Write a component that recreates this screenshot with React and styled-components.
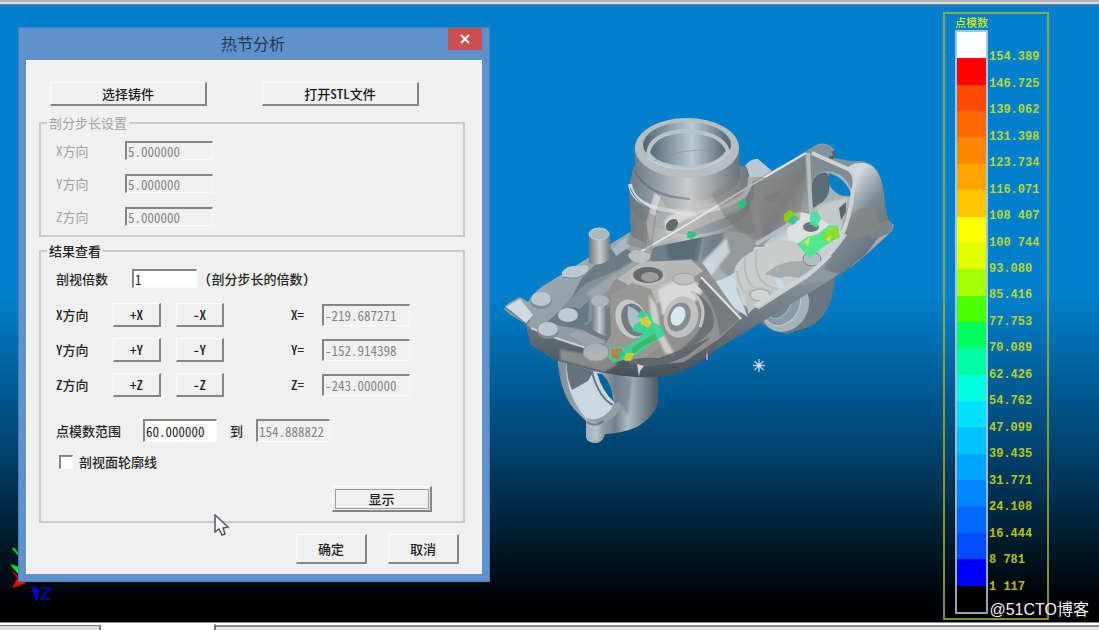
import React from 'react'
import styled, { createGlobalStyle } from 'styled-components'

const GlobalStyle = createGlobalStyle`
  * {
    box-sizing: border-box;
  }

  body {
    background: #000;
    margin: 0;
  }

  body, button, input {
    font-family: 'Noto Sans CJK SC', 'Noto Sans', sans-serif;
    font-feature-settings: 'hwid';
    font-size: 13px;
    line-height: 18px;
  }
`

const Page = styled.div`
  display: flex;
  flex-direction: column;
  min-height: 100vh;
`

const TopEdge = styled.div`
  background: linear-gradient(#b4b4b4 0 2px, #dedede 2px 4px, #807c78 4px);
  height: 5px;
`

const Scene = styled.main`
  background: linear-gradient(#0080cc 47%, #00406a 73%, #000 97%);
  display: flex;
  flex: 1;
  padding: 7px 50px 2px 18px;
  position: relative;
`

const BottomEdge = styled.div`
  align-items: flex-end;
  background: linear-gradient(#8c8c8c 0 1px, #fff 1px 3px, #8a8a8a 3px 5px, #e8e8e8 5px);
  display: flex;
  height: 8px;
`

const SheetTab = styled.div`
  background: ${({ $active }) => ($active ? '#fff' : '#dcdcdc')};
  border-right: 2px solid #777;
  border-top: 1px solid ${({ $active }) => ($active ? '#fff' : '#777')};
  height: ${({ $active }) => ($active ? '6px' : '5px')};
  width: ${({ $active }) => ($active ? '115px' : '101px')};
`

const Triad = styled.svg`
  bottom: 16px;
  height: 60px;
  left: 8px;
  position: absolute;
  width: 50px;
`

const Dialog = styled.section`
  align-self: flex-start;
  background: #5f91cc;
  border: 1px solid #4a7fb9;
  flex: 0 0 472px;
  margin-top: 15px;
  padding: 0 7px 7px;
  position: relative;
`

const TitleBar = styled.header`
  align-items: flex-start;
  display: flex;
  height: 32px;
`

const DialogTitle = styled.h1`
  color: #26384f;
  flex: 1;
  font-size: 16px;
  font-weight: 400;
  line-height: 30px;
  margin: 0;
  padding-left: 32px;
  text-align: center;
`

const CloseButton = styled.button`
  align-items: center;
  background: #c94f50;
  border: 0;
  display: flex;
  height: 22px;
  justify-content: center;
  padding: 0;
  width: 34px;
`

const DialogBody = styled.form`
  background: #f0f0f0;
  border-left: 1px solid #fff;
  border-top: 1px solid #fff;
  padding: 21px 17px 10px 12px;
`

const TopActions = styled.div`
  display: flex;
  gap: 55px;
  margin-bottom: 8px;
  padding-left: 11px;
`

const Button = styled.button`
  background: #f0f0f0;
  border: 1px solid #fafafa;
  border-bottom: 2px solid #858585;
  border-right: 2px solid #858585;
  color: #1c1c1c;
  font-weight: 500;
  height: ${({ $height }) => $height || 24}px;
  line-height: 18px;
  outline: ${({ $default }) => ($default ? '1px solid #9c9c9c' : 'none')};
  outline-offset: -4px;
  padding: 0;
  width: ${({ $width }) => $width}px;
`

const Group = styled.fieldset`
  border: 2px solid #cbcbcb;
  color: ${({ $muted }) => ($muted ? '#a3a3a3' : '#262626')};
  margin: 0 0 5px;
  min-width: 0;
  padding: 9px 16px 9px 15px;
`

const GroupTitle = styled.legend`
  font-weight: ${({ $strong }) => ($strong ? 500 : 400)};
  line-height: 18px;
  margin-left: -9px;
  padding: 0 2px;
`

const StepRow = styled.div`
  align-items: center;
  display: grid;
  grid-template-columns: 69px 88px;
  height: 19px;

  & + & {
    margin-top: 14px;
  }
`

const Label = styled.label`
  font-weight: ${({ $strong }) => ($strong ? 500 : 400)};
  white-space: nowrap;
`

const Field = styled.input`
  background: ${({ disabled }) => (disabled ? '#f0f0f0' : '#fff')};
  border: 1px solid #f8f8f8;
  border-left: 2px solid #858585;
  border-top: 2px solid #858585;
  color: ${({ disabled }) => (disabled ? '#858585' : '#222')};
  height: ${({ $height }) => $height}px;
  line-height: 16px;
  min-width: 0;
  outline: 0;
  padding: 0 1px;
  width: ${({ $width }) => $width}px;
`

const MultipleRow = styled.div`
  align-items: center;
  display: grid;
  grid-template-columns: 76px 65px auto;
  height: 19px;
  margin-bottom: 15px;

  & > span {
    font-weight: 500;
    padding-left: 8px;
  }
`

const AxisRow = styled.div`
  align-items: center;
  display: grid;
  grid-template-columns: 57px 63px 115px 31px 88px;
  height: 24px;
  margin-bottom: 11px;
`

const RangeRow = styled.div`
  align-items: center;
  display: grid;
  grid-template-columns: 87px 74px 39px 74px;
  height: 23px;
  margin: 22px 0 13px;

  & > span {
    font-weight: 500;
    text-align: center;
  }
`

const CheckRow = styled.div`
  align-items: center;
  display: flex;
  gap: 6px;
  height: 14px;
  padding-left: 3px;
`

const Checkbox = styled.input`
  appearance: none;
  background: #fff;
  border: 1px solid #f8f8f8;
  border-left: 2px solid #858585;
  border-top: 2px solid #858585;
  height: 14px;
  margin: 0;
  width: 14px;
`

const ShowRow = styled.div`
  display: flex;
  justify-content: flex-end;
  margin-top: 17px;
  padding-right: 15px;
`

const Footer = styled.div`
  display: flex;
  gap: 21px;
  justify-content: flex-end;
  margin-top: 11px;
  padding-right: 6px;
`

const Cursor = styled.svg`
  height: 24px;
  left: 195px;
  position: absolute;
  top: 486px;
  width: 16px;
`

const ModelView = styled.svg`
  flex: 1;
  height: 608px;
  min-width: 0;
`

const ScalePanel = styled.aside`
  border: 2px solid rgba(176, 190, 30, 0.75);
  display: grid;
  flex: 0 0 106px;
  grid-template-columns: 33px 1fr;
  grid-template-rows: 16px 1fr;
  padding: 0 0 4px 10px;
`

const ScaleTitle = styled.h2`
  color: #dbe800;
  font-size: 11px;
  font-weight: 500;
  grid-column: 1 / -1;
  line-height: 16px;
  margin: 0;
`

const ScaleBar = styled.div`
  border: 2px solid rgba(215, 235, 255, 0.7);
  display: flex;
  flex-direction: column;
`

const Swatch = styled.div`
  background: ${({ $color }) => $color};
  flex: 1;
`

const ScaleLabels = styled.ol`
  color: rgba(232, 240, 0, 0.8);
  display: flex;
  flex-direction: column;
  font-family: 'Liberation Mono', monospace;
  font-size: 12px;
  font-weight: 700;
  list-style: none;
  margin: 14px 0;
  padding: 0 0 0 1px;
`

const ScaleLabel = styled.li`
  align-items: center;
  display: flex;
  flex: 1;
  line-height: 14px;
  white-space: pre;
`

const Watermark = styled.div`
  bottom: 1px;
  color: #f4f4f4;
  font-family: 'Liberation Sans', 'Noto Sans CJK SC', sans-serif;
  font-size: 16px;
  line-height: 22px;
  position: absolute;
  right: 10px;
`

const colors = [
  '#ffffff', '#ff0000', '#ff4800', '#ff6800', '#ff8700', '#ffa500', '#ffc400', '#ffff00',
  '#e1ff00', '#a5ff00', '#4bff00', '#00ff5a', '#00ffa5', '#00ffe1', '#00e1ff', '#00c3ff',
  '#00a5ff', '#0087ff', '#0069ff', '#004bff', '#0000ff', '#000000',
]

const values = [
  '154.389', '146.725', '139.062', '131.398', '123.734', '116.071', '108 407',
  '100 744', '93.080', '85.416', '77.753', '70.089', '62.426', '54.762',
  '47.099', '39.435', '31.771', '24.108', '16.444', '8 781', '1 117',
]

const steps = ['X', 'Y', 'Z']

const axes = [
  { name: 'X', value: '-219.687271' },
  { name: 'Y', value: '-152.914398' },
  { name: 'Z', value: '-243.000000' },
]

const Casting = () => (
  <ModelView viewBox="490 12 453 608" preserveAspectRatio="xMinYMin meet" role="img" aria-label="铸件">
    <defs>
      <linearGradient id="tube">
        <stop offset="0" stopColor="#6f7b82" />
        <stop offset=".22" stopColor="#959ea3" />
        <stop offset=".5" stopColor="#c9cbcc" />
        <stop offset=".72" stopColor="#a5a7a8" />
        <stop offset="1" stopColor="#68737a" />
      </linearGradient>
      <linearGradient id="bore">
        <stop offset="0" stopColor="#52646e" />
        <stop offset=".55" stopColor="#b9cad2" />
        <stop offset="1" stopColor="#53636d" />
      </linearGradient>
      <linearGradient id="plate" x1="0" y1="0" x2="1" y2="1">
        <stop offset="0" stopColor="#b7c3c9" />
        <stop offset=".5" stopColor="#8e9aa1" />
        <stop offset="1" stopColor="#a8aeb0" />
      </linearGradient>
      <linearGradient id="skirt" x1="0" y1="0" x2="0" y2="1">
        <stop offset="0" stopColor="#b8bbbc" />
        <stop offset=".5" stopColor="#7b858b" />
        <stop offset="1" stopColor="#465158" />
      </linearGradient>
      <linearGradient id="ring">
        <stop offset="0" stopColor="#7d8b92" />
        <stop offset=".35" stopColor="#aeb9bf" />
        <stop offset=".58" stopColor="#71808a" />
        <stop offset=".7" stopColor="#aebbc2" />
        <stop offset="1" stopColor="#4a5a64" />
      </linearGradient>
      <linearGradient id="wall" x1="0" y1="0" x2="1" y2="1">
        <stop offset="0" stopColor="#969b9e" />
        <stop offset=".55" stopColor="#777c7f" />
        <stop offset="1" stopColor="#c1c2c2" />
      </linearGradient>
      <linearGradient id="pocket" x1="0" y1="0" x2="1" y2="1">
        <stop offset="0" stopColor="#566871" />
        <stop offset=".42" stopColor="#77868d" />
        <stop offset=".6" stopColor="#dce7ec" />
        <stop offset="1" stopColor="#8f999e" />
      </linearGradient>
      <linearGradient id="side" x1="0" y1="0" x2=".7" y2="1">
        <stop offset="0" stopColor="#aebfc7" />
        <stop offset=".3" stopColor="#d0dde2" />
        <stop offset=".58" stopColor="#7e8b91" />
        <stop offset="1" stopColor="#5b686f" />
      </linearGradient>
      <filter id="soft" x="-5%" y="-5%" width="110%" height="110%">
        <feGaussianBlur stdDeviation="1.3" />
      </filter>
    </defs>

    {/* lower ring */}
    <path d="M557 350Q558 390 574 409L586 421L586 437Q587 443 597 443Q603 442 605 434Q620 434 637 427Q656 415 658 402L658 365Z" fill="url(#ring)" />
    <path d="M567 361Q586 362 602 374Q616 391 614 408Q599 424 585 417Q563 390 567 361Z" fill="#cbd8de" />
    <path d="M567 361L594 371L588 381L572 390Q566 378 567 361Z" fill="#63747e" />
    <path d="M602 374Q612 383 614 402Q602 391 597 373Z" fill="#08649e" />
    <path d="M592 372Q599 398 613 405" fill="none" stroke="#667983" strokeWidth="2" />
    <path d="M614 404L623 401Q619 417 605 422Q595 424 586 420Q606 421 614 404Z" fill="#929ea4" />
    <path d="M587 422Q596 428 603 421" fill="none" stroke="#69787f" strokeWidth="2" />
    <path d="M593 426L600 425L599 440L593 440Z" fill="#bdc9ce" opacity=".7" filter="url(#soft)" />
    <path d="M617 373L632 378L628 415L617 400Z" fill="#718089" opacity=".7" filter="url(#soft)" />

    {/* right rear boss */}
    <path d="M760 302L835 258Q837 287 829 306Q819 327 798 330L788 334Q773 332 759 322Z" fill="#687780" />
    <ellipse cx="785" cy="306" rx="23" ry="27" transform="rotate(32 785 306)" fill="#a5b2b8" />
    <ellipse cx="782" cy="305" rx="17" ry="22" transform="rotate(32 782 305)" fill="#8a9ba5" stroke="#c1cbd0" />
    <ellipse cx="780" cy="304" rx="10" ry="16" transform="rotate(32 780 304)" fill="#718590" stroke="#a9bac3" />

    {/* base plate */}
    <path d="M504 309L506 305L520 297L528 302Q533 291 551 281L612 243L632 231L760 175L812 170L862 242L836 269L721 342Q690 370 665 376Q630 379 593 371L554 359L531 344L526 324L511 315Z" fill="url(#plate)" />
    <path d="M526 324Q531 330 550 337L621 359Q650 361 680 350L850 245L888 220L892 231L868 253L835 277L716 350Q690 373 660 377Q630 379 595 371L555 360L531 345Z" fill="url(#skirt)" />
    <path d="M531 328Q560 341 608 354" stroke="#c8cdcf" fill="none" strokeWidth="2" />
    <path d="M504 308L520 299L530 321L527 325Z" fill="#718088" />
    <path d="M506 307L520 299L533 315L526 323Z" fill="#ccdce2" />
    <path d="M546 323L562 309L572 297L583 276L618 244L634 253L632 300L606 343L583 330Z" fill="#6e7b83" />
    <path d="M563 307L586 283L620 269L611 306L586 325Z" fill="#83919a" />
    <path d="M585 294L638 257L639 267L596 300Z" fill="#9ca4a8" filter="url(#soft)" />
    <path d="M557 314Q568 304 580 309L589 300L588 322L570 327Z" fill="#697981" />
    <ellipse cx="568" cy="315" rx="10" ry="7" fill="#bfcdd3" />
    <ellipse cx="541" cy="301" rx="11" ry="8" fill="#7f8e96" />
    <ellipse cx="541" cy="299" rx="10" ry="7" fill="#bbc8cd" />
    <ellipse cx="548" cy="331" rx="11" ry="8" fill="#7e8b92" />
    <ellipse cx="548" cy="329" rx="10" ry="7" fill="#bdc9ce" />
    <path d="M562 272Q567 265 576 266L587 265Q592 273 580 278Q568 281 562 276Z" fill="#bbcad0" />
    <path d="M563 277Q579 282 590 270" stroke="#697981" fill="none" />
    <ellipse cx="596" cy="352" rx="13" ry="9" fill="#aab1b4" stroke="#818b90" />
    <path d="M568 334Q576 329 587 333L607 341L590 347Z" fill="#a4a9ab" opacity=".7" />
    <path d="M593 300L607 300L607 337L592 330Z" fill="url(#tube)" />
    <ellipse cx="600" cy="301" rx="9" ry="6" fill="#aeb5b8" />
    <path d="M589 234L610 234L611 257Q602 268 589 263Z" fill="url(#tube)" />
    <ellipse cx="599" cy="234" rx="10" ry="6" fill="#a9bac1" stroke="#c3ced3" />
    <path d="M612 249L622 240L629 237L629 247L616 256Z" fill="#a8b9c1" />

    {/* right bracket */}
    <path d="M741 174Q747 158 758 159L772 171L759 184L742 193Z" fill="#b9c9cf" />
    <path d="M749 184L805 152L818 144Q827 142 834 149L835 158Q844 164 857 161Q871 160 878 172Q884 184 885 207L888 220L894 225L892 231Q883 237 877 239L868 253L854 265L827 280L764 292L738 250Z" fill="#8f9a9f" />
    <path d="M849 166Q865 158 876 170Q884 182 885 210L889 221L877 239L865 255L840 275L824 269L850 219Z" fill="url(#side)" />
    <path d="M805 152Q820 140 832 149L835 158L855 162L845 169L823 162Z" fill="#84939a" />
    <path d="M833 151Q837 158 829 158" fill="none" stroke="#52636c" strokeWidth="3" />
    <path d="M754 184L805 155L808 211L754 245Z" fill="url(#wall)" />
    <path d="M808 155L852 170L853 188L837 238L811 211Z" fill="#808c92" />
    <path d="M811 194Q810 175 822 172Q842 168 852 190L849 204L837 237L813 219Z" fill="#a6b1b6" />
    <path d="M811 197Q810 176 821 173Q831 170 829 183Q832 199 813 208Z" fill="#5d6d75" />
    <path d="M829 173Q846 178 852 196Q840 198 832 189Q827 184 829 173Z" fill="#0880c8" />
    <path d="M818 205L848 197L840 238L811 218Z" fill="#c5c9ca" filter="url(#soft)" />
    <path d="M839 208L846 202L846 212L841 220Z" fill="#5b666c" />
    <path d="M868 229L887 220L892 223L892 232L872 240Z" fill="#7a858a" />
    <path d="M850 218Q862 199 877 214L882 227Q865 242 846 237Z" fill="#898583" opacity=".7" />

    {/* centre hollow and flowing inner shapes */}
    <path d="M653 248L754 182L754 253L799 212L812 214L847 235Q829 263 798 280L750 308L701 283L650 260Z" fill="url(#pocket)" />
    <path d="M698 280Q688 247 706 231Q746 228 764 244Q767 265 750 276L738 288L746 315Z" fill="#a7b1b6" />
    <path d="M716 222L757 196L764 244Q756 262 729 278L708 255Z" fill="#8e9293" opacity=".75" filter="url(#soft)" />
    <path d="M666 243L692 226L704 234L697 268L668 260Z" fill="#566770" opacity=".8" filter="url(#soft)" />
    <path d="M704 234L724 228L722 246L699 268Z" fill="#64757e" opacity=".7" filter="url(#soft)" />
    <path d="M702 262L726 238L730 252L706 282Z" fill="#dbe6eb" opacity=".75" filter="url(#soft)" />
    <path d="M695 285Q740 282 755 247L767 247Q755 274 736 288L748 317L725 302Z" fill="#d2e1e8" opacity=".9" />
    <path d="M766 246Q778 236 799 243L832 256L809 277L759 309Q736 300 734 273Q735 256 766 246Z" fill="#cbcccc" />
    <path d="M737 271Q740 302 763 293M745 256Q742 294 771 290M757 249Q751 285 778 289" fill="none" stroke="#aeb6b9" strokeWidth="2" opacity=".7" />
    <path d="M770 263L781 280L787 291L778 288Z" fill="#c4dde8" />
    <path d="M765 274Q780 260 804 261L821 257L803 279Q790 275 779 278Z" fill="#a6acae" />
    <path d="M786 216L799 212Q819 214 832 232L838 240L810 247L788 239Z" fill="#dedfe1" />
    <ellipse cx="811" cy="227" rx="8" ry="5" fill="#68727a" />
    <ellipse cx="812" cy="259" rx="9" ry="7" fill="#b2bdc4" stroke="#77848b" />
    <path d="M745 292Q757 283 774 290L775 298Q759 302 748 314Z" fill="#bfc3c4" />
    <ellipse cx="760" cy="295" rx="10" ry="6" fill="#d1d3d3" stroke="#969e9f" />

    {/* tower */}
    <path d="M629 185L634 166L746 166Q753 181 750 207Q741 225 722 233L654 247L631 236Z" fill="url(#tube)" />
    <path d="M630 190Q645 211 690 213Q735 214 751 185L750 211Q728 233 690 235Q648 230 631 211Z" fill="#5f7079" opacity=".35" />
    <path d="M630 184Q632 203 661 209Q706 219 738 200Q751 192 750 177" fill="none" stroke="#d1d5d6" strokeWidth="4" />
    <path d="M630 188Q636 205 661 213" fill="none" stroke="#667780" strokeWidth="1" />
    <path d="M634 148L636 170Q647 200 691 201Q731 200 740 178L739 148Z" fill="url(#tube)" />
    <path d="M634 169Q645 196 690 199" fill="none" stroke="#51636d" strokeWidth="2" opacity=".5" />
    <ellipse cx="687" cy="148" rx="52" ry="30" fill="#b8bec0" />
    <ellipse cx="687" cy="145" rx="44" ry="23" fill="url(#bore)" />
    <path d="M648 153Q652 132 687 131Q722 133 728 151Q719 167 687 168Q656 167 648 153Z" fill="url(#bore)" stroke="#b7c5cb" strokeWidth="4" />
    <path d="M654 161Q682 147 716 151" fill="none" stroke="#9e8984" opacity=".6" />
    <path d="M647 158Q660 168 687 169Q717 168 730 151" fill="none" stroke="#c4cacc" strokeWidth="2" />

    {/* ghosted internal ribs */}
    <path d="M647 226L656 193L672 215L690 204L715 203L736 197L754 183L739 212L698 228L647 251Z" fill="#cac6c4" opacity=".5" />
    <path d="M651 245L656 210L661 197L654 193L646 223Z" fill="#f0eeec" opacity=".5" />
    <path d="M664 222Q677 203 701 216Q679 218 668 234Z" fill="#e4e2df" opacity=".8" filter="url(#soft)" />
    <ellipse cx="672" cy="225" rx="7" ry="5" transform="rotate(-45 672 225)" fill="#646b6e" />
    <path d="M642 251L683 227L753 184L806 153" fill="none" stroke="#e6e7e6" strokeWidth="2" />
    <path d="M808 153L811 214M756 244L795 221" fill="none" stroke="#b5bdc0" strokeWidth="4" />
    <path d="M711 194L733 180L752 177L784 177L803 188L800 220L774 226L754 241L726 218Z" fill="#84807f" opacity=".45" />
    <path d="M764 198L784 188L775 201L768 202ZM723 215L750 206L756 234L740 233ZM637 208L656 216L652 251L626 244Z" fill="#777575" opacity=".4" />
    <path d="M812 153L850 170Q858 178 853 190Q849 226 836 245Q821 268 799 280L755 306" fill="none" stroke="#cfd3d3" strokeWidth="4" />

    {/* front housing */}
    <path d="M609 292Q611 280 622 276L639 263L691 259L704 265L741 318L719 339Q701 351 684 362L641 367L612 353Z" fill="#8f908f" />
    <path d="M617 279L641 262L691 260L703 271L682 285L657 304L640 291Z" fill="#b8b9b7" />
    <path d="M641 251Q633 248 628 255Q629 262 642 263Q652 260 650 254Z" fill="#bdc0bf" />
    <path d="M658 290Q673 279 690 279L705 288L691 307L662 315Z" fill="#d9dad8" filter="url(#soft)" />
    <path d="M611 294L632 283L651 289L659 311L659 348L633 365L611 354Z" fill="#989795" />
    <ellipse cx="648" cy="276" rx="17" ry="9" fill="#c1c2c0" />
    <ellipse cx="648" cy="275" rx="15" ry="8" fill="#626c70" />
    <ellipse cx="650" cy="277" rx="9" ry="5" fill="#9c9e9d" />
    <ellipse cx="684" cy="279" rx="11" ry="6" fill="#c0c2c0" stroke="#9c9e9e" />
    <ellipse cx="631" cy="319" rx="15" ry="20" transform="rotate(-22 631 319)" fill="#c6c8c7" />
    <ellipse cx="634" cy="320" rx="12" ry="17" transform="rotate(-22 634 320)" fill="#6f7b80" />
    <path d="M628 306Q648 313 642 333Q625 330 628 306Z" fill="#abc0c9" />
    <path d="M649 294L657 306L660 328L676 357L665 353L651 324Z" fill="#deddda" opacity=".8" filter="url(#soft)" />
    <ellipse cx="681" cy="317" rx="17" ry="21" transform="rotate(18 681 317)" fill="#bfc1c0" />
    <ellipse cx="679" cy="317" rx="11" ry="15" transform="rotate(22 679 317)" fill="#878c8d" />
    <ellipse cx="678" cy="316" rx="7" ry="10" transform="rotate(22 678 316)" fill="#d6e7ed" />
    <path d="M691 290Q710 303 701 327Q694 340 679 350Q703 343 713 328Q718 304 691 290Z" fill="#6b7377" />
    <path d="M691 291Q709 304 700 327" fill="none" stroke="#c4c6c5" strokeWidth="3" />
    <path d="M702 276L740 318L720 336Q717 305 698 286Z" fill="#777a7a" />
    <path d="M701 277L741 319" stroke="#dce8ec" strokeWidth="2" />
    <path d="M616 367Q629 356 659 358L680 350L710 338L687 356L665 365L640 373Z" fill="#515b60" opacity=".75" />
    <path d="M637 364L644 366L640 371L639 377Z" fill="#d4d4d1" />
    <path d="M560 349Q587 356 608 354L617 365L604 372L560 360Z" fill="#c1b8b3" opacity=".5" filter="url(#soft)" />

    {/* hot spots */}
    <g opacity=".9">
      <path d="M610 350L618 346L625 348L639 338L644 334L632 331L634 325L645 319L637 317L640 311L651 314L653 322L662 327L665 335L653 342L641 352L629 358L614 363L608 358Z" fill="#35d795" />
      <path d="M632 348L655 333L657 339L642 347L633 354Z" fill="#32bd60" />
      <path d="M611 350L621 348L624 354L618 359L612 357Z" fill="#ef682e" />
      <path d="M618 350L626 354L620 357L616 354Z" fill="#2cc57d" />
      <path d="M640 319L647 316L652 323L648 328L641 324Z" fill="#d8d832" />
      <path d="M626 353L634 353L631 361L624 360Z" fill="#c5d620" />
      <path d="M688 231L695 232L697 235L692 239L687 238ZM738 202L744 198L747 203L744 208L738 209Z" fill="#22c780" />
      <path d="M784 214L790 210L799 217L793 224L784 221Z" fill="#8ed400" />
      <path d="M793 215L799 219L793 225L787 221Z" fill="#32c2ad" />
      <path d="M810 213L817 211L821 218L817 228L810 224Z" fill="#43e1a0" />
      <path d="M797 244L807 237L818 234L829 225L838 226L840 237L826 245L817 252L809 258L805 253Z" fill="#48e889" />
      <path d="M822 235L832 226L839 230L838 238L826 242Z" fill="#85df19" />
      <path d="M804 242L810 237L808 246ZM826 239L832 235L829 242Z" fill="#d9e738" />
    </g>

    <path d="M707 335V360" stroke="#a16f83" strokeWidth="1" opacity=".6" />
    <path d="M707 354V360" stroke="#c987c3" strokeWidth="2" />
    <g stroke="#a9c9f1" strokeWidth="1.4">
      <path d="M759 359V372M753 365.500H765M754.500 361L763.500 370M763.500 361L754.500 370" />
      <circle cx="759" cy="365.500" r="2" fill="#f6d7ff" stroke="none" />
    </g>
  </ModelView>
)

const App = () => (
  <>
    <GlobalStyle />
    <Page>
      <TopEdge />
      <Scene>
        <Triad viewBox="8 546 50 60" aria-hidden="true">
          <path d="M13 548L18 554" stroke="#00d820" strokeWidth="2" />
          <path d="M10 564L22 568L18 574Z" fill="#00f020" />
          <path d="M12 588L18 577L26 583Z" fill="#f00" />
          <path d="M13 572L20 580" stroke="#a00" strokeWidth="2" />
          <path d="M32 590Q35 583 39 590L37 602Z" fill="#0000f0" />
          <path d="M41 588H50L41 599H50" fill="none" stroke="#0000c8" strokeWidth="1.500" />
        </Triad>

        <Dialog aria-labelledby="dialog-title">
          <TitleBar>
            <DialogTitle id="dialog-title">热节分析</DialogTitle>
            <CloseButton type="button" aria-label="关闭">
              <svg width="10" height="10" viewBox="0 0 10 10" aria-hidden="true">
                <path d="M1 1L9 9M9 1L1 9" stroke="#fff" strokeWidth="2" />
              </svg>
            </CloseButton>
          </TitleBar>

          <DialogBody onSubmit={(e) => e.preventDefault()}>
            <TopActions>
              <Button type="button" $width={157}>选择铸件</Button>
              <Button type="button" $width={157}>打开STL文件</Button>
            </TopActions>

            <Group $muted>
              <GroupTitle>剖分步长设置</GroupTitle>
              {steps.map((name) => (
                <StepRow key={name}>
                  <Label htmlFor={`step-${name}`}>{name}方向</Label>
                  <Field id={`step-${name}`} $height={19} $width={88} defaultValue="5.000000" disabled />
                </StepRow>
              ))}
            </Group>

            <Group>
              <GroupTitle $strong>结果查看</GroupTitle>
              <MultipleRow>
                <Label $strong htmlFor="multiple">剖视倍数</Label>
                <Field id="multiple" $height={19} $width={65} defaultValue="1" />
                <span>(剖分步长的倍数)</span>
              </MultipleRow>
              {axes.map(({ name, value }) => (
                <AxisRow key={name}>
                  <Label as="span" $strong>{name}方向</Label>
                  <Button type="button" $width={48}>+{name}</Button>
                  <Button type="button" $width={48}>-{name}</Button>
                  <Label $strong htmlFor={`pos-${name}`}>{name}=</Label>
                  <Field id={`pos-${name}`} $height={22} $width={88} defaultValue={value} disabled />
                </AxisRow>
              ))}
              <RangeRow>
                <Label $strong htmlFor="range-from">点模数范围</Label>
                <Field id="range-from" $height={23} $width={74} defaultValue="60.000000" />
                <span>到</span>
                <Field aria-label="到" $height={23} $width={74} defaultValue="154.888822" disabled />
              </RangeRow>
              <CheckRow>
                <Checkbox id="outline" type="checkbox" />
                <Label $strong htmlFor="outline">剖视面轮廓线</Label>
              </CheckRow>
              <ShowRow>
                <Button type="button" $default $height={26} $width={100}>显示</Button>
              </ShowRow>
            </Group>

            <Footer>
              <Button type="submit" $height={30} $width={71}>确定</Button>
              <Button type="button" $height={30} $width={71}>取消</Button>
            </Footer>
          </DialogBody>

          <Cursor viewBox="0 0 16 24" aria-hidden="true">
            <path d="M1 1L1 18L5 15L8 21L11 20L9 14L14 13Z" fill="#fff" stroke="#555566" strokeWidth="1.500" />
          </Cursor>
        </Dialog>

        <Casting />

        <ScalePanel>
          <ScaleTitle>点模数</ScaleTitle>
          <ScaleBar>
            {colors.map((color) => (
              <Swatch key={color} $color={color} />
            ))}
          </ScaleBar>
          <ScaleLabels>
            {values.map((value) => (
              <ScaleLabel key={value}>{value}</ScaleLabel>
            ))}
          </ScaleLabels>
        </ScalePanel>
        <Watermark>@51CTO博客</Watermark>
      </Scene>
      <BottomEdge>
        <SheetTab />
        <SheetTab $active />
      </BottomEdge>
    </Page>
  </>
)

export default App
